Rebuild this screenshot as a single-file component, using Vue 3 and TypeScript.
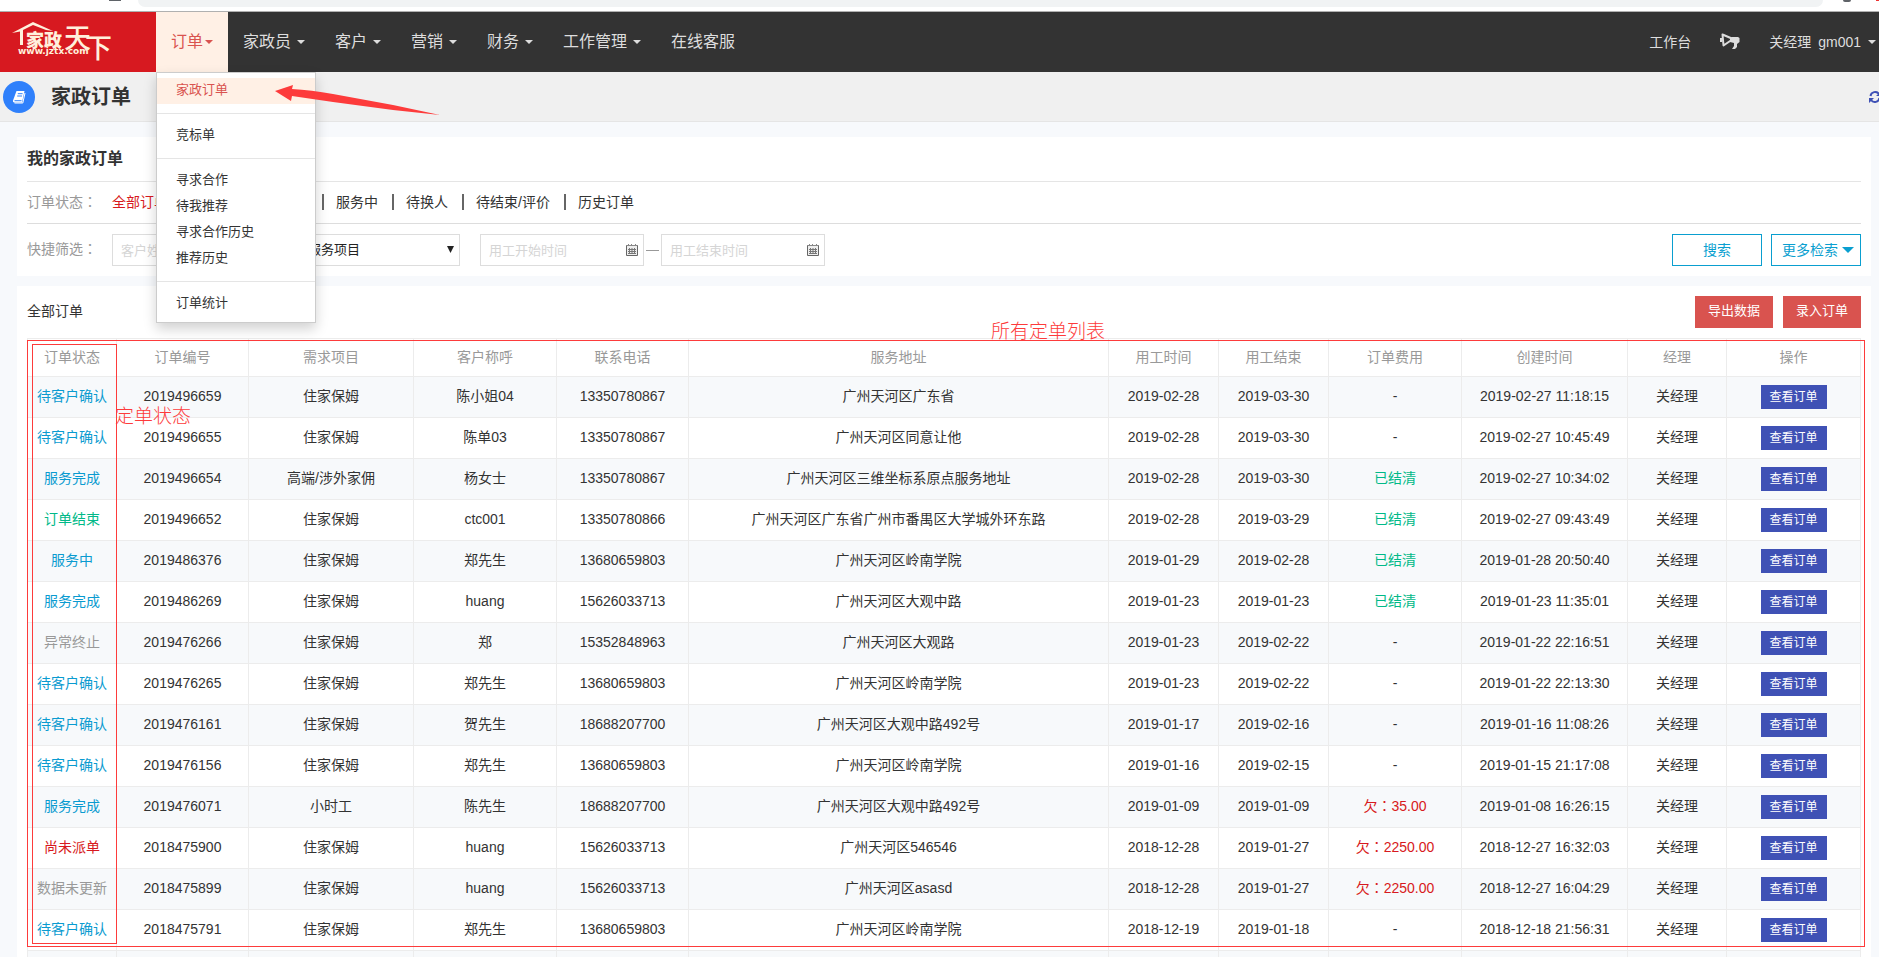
<script setup lang="ts">
import { ref } from 'vue'

interface NavItem { label: string; caret: boolean }
interface Order {
  status: string
  tone: 'blue' | 'green' | 'grey' | 'red'
  no: string
  item: string
  client: string
  phone: string
  address: string
  start: string
  end: string
  fee: string
  created: string
}

const navItems: NavItem[] = [
  { label: '家政员', caret: true },
  { label: '客户', caret: true },
  { label: '营销', caret: true },
  { label: '财务', caret: true },
  { label: '工作管理', caret: true },
  { label: '在线客服', caret: false },
]

const menuGroups: string[][] = [
  ['家政订单'],
  ['竞标单'],
  ['寻求合作', '待我推荐', '寻求合作历史', '推荐历史'],
  ['订单统计'],
]

const states = ['全部订单', '待派单', '待确认', '服务中', '待换人', '待结束/评价', '历史订单']
const columns = ['订单状态', '订单编号', '需求项目', '客户称呼', '联系电话', '服务地址', '用工时间', '用工结束', '订单费用', '创建时间', '经理', '操作']
const colClasses = ['c-status', 'c-no', 'c-item', 'c-client', 'c-phone', 'c-address', 'c-date', 'c-date', 'c-fee', 'c-created', 'c-manager', 'c-action']

const row = (
  status: string, tone: Order['tone'], no: string, item: string, client: string, phone: string,
  address: string, start: string, end: string, fee: string, created: string,
): Order => ({ status, tone, no, item, client, phone, address, start, end, fee, created })

const orders: Order[] = [
  row('待客户确认', 'blue', '2019496659', '住家保姆', '陈小姐04', '13350780867', '广州天河区广东省', '2019-02-28', '2019-03-30', '-', '2019-02-27 11:18:15'),
  row('待客户确认', 'blue', '2019496655', '住家保姆', '陈单03', '13350780867', '广州天河区同意让他', '2019-02-28', '2019-03-30', '-', '2019-02-27 10:45:49'),
  row('服务完成', 'blue', '2019496654', '高端/涉外家佣', '杨女士', '13350780867', '广州天河区三维坐标系原点服务地址', '2019-02-28', '2019-03-30', '已结清', '2019-02-27 10:34:02'),
  row('订单结束', 'green', '2019496652', '住家保姆', 'ctc001', '13350780866', '广州天河区广东省广州市番禺区大学城外环东路', '2019-02-28', '2019-03-29', '已结清', '2019-02-27 09:43:49'),
  row('服务中', 'blue', '2019486376', '住家保姆', '郑先生', '13680659803', '广州天河区岭南学院', '2019-01-29', '2019-02-28', '已结清', '2019-01-28 20:50:40'),
  row('服务完成', 'blue', '2019486269', '住家保姆', 'huang', '15626033713', '广州天河区大观中路', '2019-01-23', '2019-01-23', '已结清', '2019-01-23 11:35:01'),
  row('异常终止', 'grey', '2019476266', '住家保姆', '郑', '15352848963', '广州天河区大观路', '2019-01-23', '2019-02-22', '-', '2019-01-22 22:16:51'),
  row('待客户确认', 'blue', '2019476265', '住家保姆', '郑先生', '13680659803', '广州天河区岭南学院', '2019-01-23', '2019-02-22', '-', '2019-01-22 22:13:30'),
  row('待客户确认', 'blue', '2019476161', '住家保姆', '贺先生', '18688207700', '广州天河区大观中路492号', '2019-01-17', '2019-02-16', '-', '2019-01-16 11:08:26'),
  row('待客户确认', 'blue', '2019476156', '住家保姆', '郑先生', '13680659803', '广州天河区岭南学院', '2019-01-16', '2019-02-15', '-', '2019-01-15 21:17:08'),
  row('服务完成', 'blue', '2019476071', '小时工', '陈先生', '18688207700', '广州天河区大观中路492号', '2019-01-09', '2019-01-09', '欠：35.00', '2019-01-08 16:26:15'),
  row('尚未派单', 'red', '2018475900', '住家保姆', 'huang', '15626033713', '广州天河区546546', '2018-12-28', '2019-01-27', '欠：2250.00', '2018-12-27 16:32:03'),
  row('数据未更新', 'grey', '2018475899', '住家保姆', 'huang', '15626033713', '广州天河区asasd', '2018-12-28', '2019-01-27', '欠：2250.00', '2018-12-27 16:04:29'),
  row('待客户确认', 'blue', '2018475791', '住家保姆', '郑先生', '13680659803', '广州天河区岭南学院', '2018-12-19', '2019-01-18', '-', '2018-12-18 21:56:31'),
  row('服务完成', 'blue', '2018475788', '住家保姆', '郑先生', '13680659803', '广州天河区岭南学院', '2018-12-18', '2019-01-17', '已结清', '2018-12-17 10:12:08'),
]

const feeTone = (fee: string): string => (fee.startsWith('欠') ? 'red' : fee === '-' ? 'dark' : 'green')

const customer = ref('')
const startDate = ref('')
const endDate = ref('')
const service = ref('服务项目')
</script>

<template>
  <div class="page">
    <div class="browser">
      <span class="browser-home"></span>
      <span class="browser-address"></span>
      <span class="browser-dot"></span>
      <span class="browser-badge"></span>
    </div>

    <header class="topbar">
      <a class="logo" href="#" aria-label="家政天下">
        <svg width="156" height="60" viewBox="0 0 156 60">
          <path d="M12 21 L33 10 L53 19 L46 18 L33 13 L23 18 V33 H20 V19.500 Z" fill="#fff0dc" />
          <text class="logo-a" x="26" y="35">家政</text>
          <text class="logo-b" x="64" y="36">天</text>
          <text class="logo-b" x="85" y="46">下</text>
          <text class="logo-c" x="18" y="42">www.jztx.com</text>
        </svg>
      </a>
      <nav class="nav">
        <div class="nav-current">
          <a class="nav-link active" href="#">订单<i class="caret"></i></a>
          <div class="menu">
            <ul v-for="(group, g) in menuGroups" :key="g" class="menu-group">
              <li v-for="entry in group" :key="entry">
                <a href="#" :class="['menu-link', { on: entry === '家政订单' }]">{{ entry }}</a>
              </li>
            </ul>
          </div>
        </div>
        <a v-for="n in navItems" :key="n.label" class="nav-link" href="#">{{ n.label }}<i v-if="n.caret" class="caret"></i></a>
      </nav>
      <div class="account">
        <a class="account-link" href="#">工作台</a>
        <a class="account-link" href="#" aria-label="公告">
          <svg width="20" height="18" viewBox="0 0 20 18">
            <path d="M2.500 1.500 L13 6 L3.500 12.500 Z" fill="none" stroke="#ddd" stroke-width="2" stroke-linejoin="round" />
            <path d="M1 5 V9" stroke="#ddd" stroke-width="2" />
            <path d="M10 5 L12 4 H18 L19.500 5 V9 L17 11 V14 L15 16 H12 L14 13 V10 L10 9 Z" fill="#ddd" />
          </svg>
        </a>
        <a class="account-link user" href="#"><span>关经理</span><span>gm001</span><i class="caret"></i></a>
      </div>
    </header>

    <div class="heading">
      <span class="heading-icon">
        <svg width="14" height="14" viewBox="0 0 14 14">
          <path d="M4.500 1 H12.500 L10 12.500 H2 Q0.500 12 1 10.500 Z" fill="#fff" />
          <path d="M5.800 3.700 H10.600 M5.200 6 H10 M2.500 10.700 H9.500" fill="none" stroke="#2f80fb" stroke-width="1" />
          <path d="M13 3 L10.800 13 H2.500" fill="none" stroke="#fff" stroke-width="1" />
        </svg>
      </span>
      <h1>家政订单</h1>
      <button class="refresh" type="button" aria-label="刷新">
        <svg width="12" height="14" viewBox="0 0 12 14">
          <path d="M1.500 6 A4.700 4.700 0 0 1 10 4 M10.500 8 A4.700 4.700 0 0 1 2 10" fill="none" stroke="#3f51b5" stroke-width="2" />
          <path d="M12 1 V6 H7 Z M0 13 V8 H5 Z" fill="#3f51b5" />
        </svg>
      </button>
    </div>

    <main class="content">
      <section class="panel">
        <h2>我的家政订单</h2>
        <div class="state-row">
          <span class="label">订单状态<span class="colon">：</span></span>
          <a v-for="(s, i) in states" :key="s" href="#" :class="['state', { on: i === 0 }]">{{ s }}</a>
        </div>
        <form class="filters" @submit.prevent>
          <span class="label">快捷筛选<span class="colon">：</span></span>
          <input v-model="customer" class="field" type="text" placeholder="客户姓名" aria-label="客户姓名">
          <div class="select-wrap">
            <select v-model="service" class="field" aria-label="服务项目">
              <option>服务项目</option>
            </select>
            <svg class="select-arrow" width="7" height="7" viewBox="0 0 7 7"><path d="M0 0 H7 L3.500 7 Z" fill="#222" /></svg>
          </div>
          <div class="date-range">
            <div class="date">
              <input v-model="startDate" class="field" type="text" placeholder="用工开始时间" aria-label="用工开始时间">
              <svg class="calendar" width="12" height="12" viewBox="0 0 12 12">
                <path d="M0.500 2 V11.500 H11.500 V2" fill="#eee" stroke="#666" /><path d="M0 1.500 H12 M2.500 0 V2 M5.500 0 V2 M9.500 0 V2" stroke="#888" />
                <path d="M2 5.500 H10 M2 7.500 H10 M2 9.500 H10 M3.500 4 V10 M6 4 V10 M8.500 4 V10" stroke="#777" />
              </svg>
            </div>
            <span class="dash"></span>
            <div class="date">
              <input v-model="endDate" class="field" type="text" placeholder="用工结束时间" aria-label="用工结束时间">
              <svg class="calendar" width="12" height="12" viewBox="0 0 12 12">
                <path d="M0.500 2 V11.500 H11.500 V2" fill="#eee" stroke="#666" /><path d="M0 1.500 H12 M2.500 0 V2 M5.500 0 V2 M9.500 0 V2" stroke="#888" />
                <path d="M2 5.500 H10 M2 7.500 H10 M2 9.500 H10 M3.500 4 V10 M6 4 V10 M8.500 4 V10" stroke="#777" />
              </svg>
            </div>
          </div>
          <div class="filter-actions">
            <button class="outline" type="submit">搜索</button>
            <button class="outline more" type="button">更多检索<i class="triangle"></i></button>
          </div>
        </form>
      </section>

      <section class="panel list">
        <div class="list-head">
          <span class="list-title">全部订单</span>
          <div class="list-actions">
            <button class="solid" type="button">导出数据</button>
            <button class="solid" type="button">录入订单</button>
          </div>
        </div>
        <table class="orders">
          <colgroup><col v-for="(c, i) in colClasses" :key="i" :class="c"></colgroup>
          <thead>
            <tr><th v-for="c in columns" :key="c" scope="col">{{ c }}</th></tr>
          </thead>
          <tbody>
            <tr v-for="o in orders" :key="o.no">
              <td :class="o.tone">{{ o.status }}</td>
              <td>{{ o.no }}</td>
              <td>{{ o.item }}</td>
              <td>{{ o.client }}</td>
              <td>{{ o.phone }}</td>
              <td>{{ o.address }}</td>
              <td>{{ o.start }}</td>
              <td>{{ o.end }}</td>
              <td :class="[feeTone(o.fee), 'colon']">{{ o.fee }}</td>
              <td>{{ o.created }}</td>
              <td>关经理</td>
              <td class="action"><button class="view" type="button">查看订单</button></td>
            </tr>
          </tbody>
        </table>
        <div class="mark mark-table"></div>
        <div class="mark mark-status"></div>
        <span class="note note-table">所有定单列表</span>
        <span class="note note-status">定单状态</span>
      </section>
    </main>

    <svg class="arrow" width="166" height="34" viewBox="0 0 166 34">
      <path d="M0 9 L18 3 L17 7 Q36 8 58 12 L118 23 L165 33 L118 28 L58 20 L17 14 L16 19 Z" fill="#fd3b3b" />
    </svg>
  </div>
</template>

<style>
body {
  margin: 0;
  background: #f7f9fc;
}
</style>

<style scoped>
.page {
  position: relative;
  overflow: hidden;
  color: #333;
  font: 14px/20px "Liberation Sans", "Noto Sans CJK SC", sans-serif;
}
.page * { box-sizing: border-box; }
a { color: inherit; text-decoration: none; }
button, input, select { font: inherit; }
button { border: 0; padding: 0; cursor: pointer; }

.browser {
  display: flex;
  height: 12px;
  background: #fff;
  border-bottom: 1px solid #b0b0b0;
}
.browser-home {
  width: 12px;
  height: 1px;
  margin: 0 17px 0 109px;
  background: #5f6368;
}
.browser-address {
  flex: 1;
  height: 7px;
  border-radius: 0 0 16px 16px;
  background: #f1f3f4;
}
.browser-dot {
  width: 8px;
  height: 2px;
  margin: 0 25px 0 20px;
  border-radius: 0 0 4px 4px;
  background: #5f6368;
}
.browser-badge { width: 3px; height: 1px; background: #e33; }

.topbar {
  display: flex;
  height: 60px;
  background: #333;
  color: #ddd;
}
.logo { width: 156px; background: #d71920; }
.logo svg { display: block; }
.logo text { fill: #fff0dc; font-family: "Noto Sans CJK SC", sans-serif; }
.logo .logo-a { font-size: 18px; font-weight: 900; }
.logo .logo-b { font-size: 27px; font-weight: 500; }
.logo .logo-c { font-size: 9px; font-weight: 700; font-family: "DejaVu Sans", sans-serif; }
.nav { display: flex; font-size: 16px; }
.nav-current { position: relative; }
.nav-link {
  display: flex;
  align-items: center;
  gap: 6px;
  height: 60px;
  padding: 0 15px;
}
.nav-link.active {
  gap: 2px;
  background: #fff0e5;
  color: #d9534f;
}
.caret {
  border: 4px solid transparent;
  border-top-color: currentColor;
  border-bottom: 0;
}
.account {
  display: flex;
  align-items: center;
  gap: 29px;
  margin-left: auto;
  padding-right: 3px;
}
.account-link { display: flex; align-items: center; }
.user { gap: 7px; }

.menu {
  position: absolute;
  z-index: 5;
  top: 60px;
  left: 0;
  width: 160px;
  padding: 5px 0;
  border: 1px solid #ccc;
  background: #fff;
  box-shadow: 0 6px 12px rgba(0, 0, 0, 0.18);
  color: #333;
  font-size: 13px;
}
.menu-group { margin: 0; padding: 0; list-style: none; }
.menu-group + .menu-group {
  margin-top: 9px;
  padding-top: 9px;
  border-top: 1px solid #e5e5e5;
}
.menu-link { display: block; padding: 0 19px 2px; line-height: 24px; }
.menu-link.on { background: #fff0e5; color: #d9534f; }

.heading {
  display: flex;
  align-items: center;
  height: 50px;
  padding-left: 3px;
  border-bottom: 1px solid #e5e5e5;
  background: #f0f0f0;
}
.heading-icon {
  display: flex;
  align-items: center;
  justify-content: center;
  width: 32px;
  height: 32px;
  border-radius: 50%;
  background: #2f80fb;
}
h1 { margin: 0 0 0 16px; font-size: 20px; line-height: 28px; }
.refresh {
  display: flex;
  margin: 0 -2px 0 auto;
  background: none;
}

.content { padding: 15px 8px 0 17px; }
.panel {
  position: relative;
  margin-bottom: 10px;
  padding: 0 10px 10px;
  background: #fff;
}
h2 {
  margin: 0;
  border-bottom: 1px solid #e5e5e5;
  font-size: 16px;
  line-height: 44px;
}
.label { width: 85px; padding-bottom: 2px; color: #999; }
.colon { font-family: "Liberation Sans", "Noto Sans CJK TC", sans-serif; }
.state-row {
  display: flex;
  align-items: center;
  height: 42px;
  border-bottom: 1px solid #ddd;
}
.state { display: flex; align-items: center; padding-bottom: 2px; }
.state + .state::before {
  width: 2px;
  height: 16px;
  margin: 0 12px 0 14px;
  background: #666;
  content: "";
}
.state.on { color: #d71920; }
.filters {
  display: flex;
  align-items: center;
  padding-top: 10px;
}
.field {
  display: block;
  width: 164px;
  height: 32px;
  padding: 0 8px;
  border: 1px solid #ddd;
  border-radius: 0;
  background: #fff;
  outline: 0;
  color: #222;
  font-size: 13px;
}
.field::placeholder { color: #d5d5d5; opacity: 1; }
.select-wrap { position: relative; margin: 0 20px; }
.select-wrap .field { padding: 0 11px; appearance: none; }
.select-arrow {
  position: absolute;
  top: 12px;
  right: 6px;
  pointer-events: none;
}
.date-range { display: flex; align-items: center; gap: 2px; }
.date { position: relative; }
.calendar { position: absolute; top: 10px; right: 6px; }
.dash { width: 13px; height: 1px; background: #999; }
.filter-actions { display: flex; gap: 9px; margin-left: auto; }
.outline {
  display: flex;
  align-items: center;
  justify-content: center;
  gap: 4px;
  width: 90px;
  height: 32px;
  border: 1px solid #0a9fd0;
  background: #fff;
  color: #0a9fd0;
}
.more { padding-left: 4px; }
.triangle {
  border: 6px solid transparent;
  border-top-color: currentColor;
  border-bottom: 0;
}

.list { padding-top: 10px; }
.list-head {
  display: flex;
  align-items: center;
  justify-content: space-between;
  margin-bottom: 10px;
}
.list-title { padding-bottom: 2px; }
.list-actions { display: flex; gap: 10px; }
.solid {
  width: 78px;
  height: 32px;
  padding-bottom: 2px;
  background: #d9534f;
  color: #fff;
  font-size: 13px;
}
.orders {
  width: 100%;
  border-collapse: collapse;
  table-layout: fixed;
  text-align: center;
}
.orders th, .orders td { padding: 0 0 2px; border: 1px solid #ececec; }
.orders th { height: 38px; color: #999; font-weight: 400; }
.orders td { height: 41px; }
.orders .action { padding: 0; }
.orders tbody tr:nth-child(odd) { background: #f7f9fb; }
.c-status { width: 89px; }
.c-no, .c-phone { width: 132px; }
.c-item { width: 165px; }
.c-client { width: 143px; }
.c-date { width: 110px; }
.c-fee { width: 133px; }
.c-created { width: 166px; }
.c-manager { width: 99px; }
.c-action { width: 134px; }
.blue { color: #0a9bd0; }
.green { color: #00b988; }
.grey { color: #999; }
.red { color: #d71920; }
.view {
  width: 66px;
  height: 24px;
  background: #3f51b5;
  color: #fff;
  font-size: 12px;
  vertical-align: middle;
}

.mark {
  position: absolute;
  border: 1px solid #fd3b3b;
  pointer-events: none;
}
.mark-table { top: 54px; right: 6px; left: 10px; height: 607px; }
.mark-status { top: 58px; left: 15px; width: 85px; height: 600px; }
.note {
  position: absolute;
  color: #fd3b3b;
  font-size: 19px;
  font-weight: 300;
  line-height: 24px;
}
.note-table { top: 34px; left: 974px; }
.note-status { top: 119px; left: 98px; }
.arrow {
  position: absolute;
  z-index: 6;
  top: 82px;
  left: 275px;
  pointer-events: none;
}
</style>
